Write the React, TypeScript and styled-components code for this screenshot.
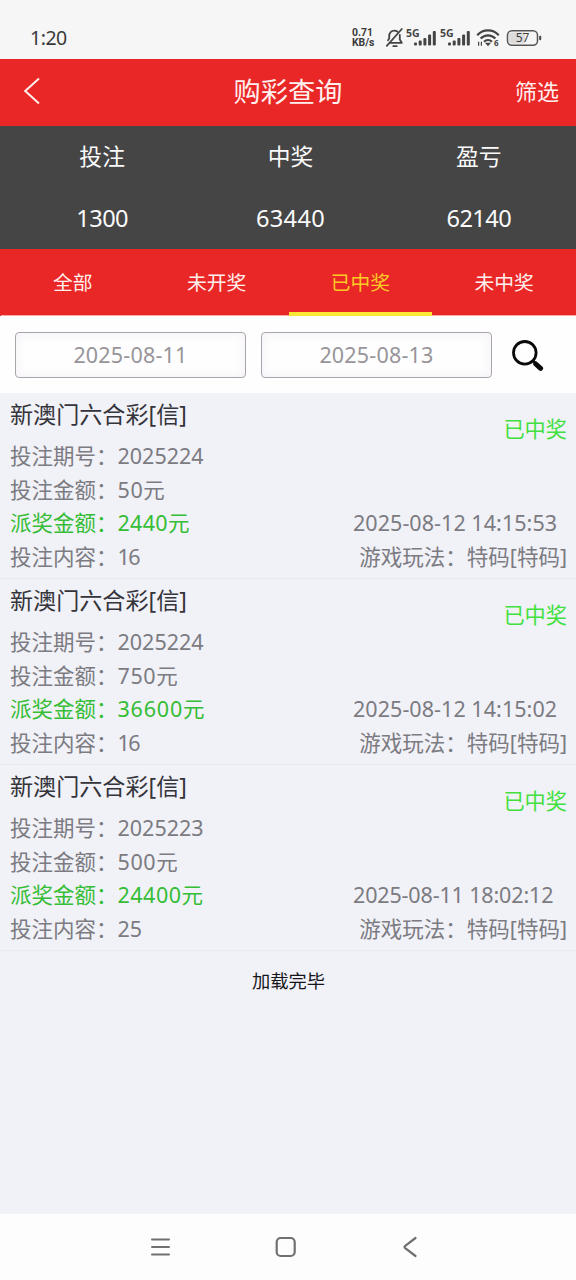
import React from "react";
import styled, { createGlobalStyle } from "styled-components";

const GlobalStyle = createGlobalStyle`
  * { box-sizing: border-box; }
  body {
    margin: 0;
    background: #f1f1f8;
    font-family: "Noto Sans", "Noto Sans CJK SC", sans-serif;
  }
`;

const Screen = styled.div`
  width: 576px;
  height: 1280px;
  display: flex;
  flex-direction: column;
  overflow: hidden;
  background: #f1f1f8;
`;

const StatusBar = styled.div`
  height: 59px;
  flex: none;
  display: flex;
  justify-content: space-between;
  padding: 16px 34px 0 30px;
  background: #f6f6f6;
  color: #3a3a3a;
`;

const Clock = styled.div`
  height: 42px;
  line-height: 43px;
  font-size: 19.5px;
  letter-spacing: -0.5px;
`;

const StatusIcons = styled.div`
  display: flex;
  height: 43px;
  align-items: center;
`;

const NetSpeed = styled.div`
  width: 32px;
  font: 700 10.4px/10px Roboto, sans-serif;
  white-space: nowrap;
`;

const SpeedLine = styled.div`
  height: 10px;
`;

const Header = styled.header`
  height: 67px;
  flex: none;
  display: grid;
  grid-template-columns: 1fr auto 1fr;
  align-items: center;
  padding: 0 17px 0 23px;
  background: #e92726;
  color: #fff0ee;
`;

const BackIcon = styled.svg`
  width: 18px;
  height: 28px;
  margin-bottom: 3px;
`;

const Title = styled.h1`
  margin: 0 6px 0 0;
  height: 67px;
  line-height: 65px;
  font-size: 27.2px;
  font-weight: 400;
`;

const FilterLink = styled.div`
  height: 67px;
  line-height: 65px;
  text-align: right;
  font-size: 22px;
`;

const Stats = styled.section`
  height: 123px;
  flex: none;
  display: grid;
  grid-template-columns: repeat(3, 1fr);
  padding: 0 3px 0 8px;
  background: #454545;
  color: #fafafa;
  text-align: center;
`;

const StatLabel = styled.div`
  height: 61px;
  line-height: 61px;
  font-size: 22.8px;
`;

const StatValue = styled.div<{ $track?: number }>`
  height: 62px;
  line-height: 62px;
  font-size: 23.6px;
  letter-spacing: ${(p) => p.$track ?? 0}px;
`;

const Tabs = styled.nav`
  height: 67px;
  flex: none;
  display: grid;
  grid-template-columns: repeat(4, 1fr);
  padding-left: 1px;
  background: #e92726;
`;

const Tab = styled.div<{ $active?: boolean }>`
  height: 67px;
  line-height: 67px;
  text-align: center;
  font-size: 19.8px;
  color: ${(p) => (p.$active ? "#fbcb24" : "#fff0ee")};
  border-bottom: ${(p) => (p.$active ? "4px solid #fbe834" : "1px solid #f6a9a6")};
`;

const SearchRow = styled.div`
  height: 77px;
  flex: none;
  display: flex;
  align-items: flex-start;
  gap: 15px;
  padding: 16px 0 0 15px;
  background: #fefefe;
`;

const DateField = styled.div`
  width: 231px;
  height: 46px;
  line-height: 43px;
  border: 1px solid #aaa5ad;
  border-radius: 4px;
  box-shadow: inset 0 0 12px #f3eff5;
  color: #979599;
  text-align: center;
  font-size: 21.5px;
  letter-spacing: 0.2px;
`;

const SearchButton = styled.div`
  margin: 8px 0 0 5px;
  height: 32px;
`;

const Record = styled.article`
  height: 186px;
  flex: none;
  display: flex;
  justify-content: space-between;
  padding: 0 9px 0 10px;
  border-bottom: 1px solid #e8e8ee;
  white-space: nowrap;
`;

const Details = styled.div``;

const Meta = styled.div`
  width: 214px;
  text-align: right;
`;

const Game = styled.div`
  height: 46px;
  line-height: 42px;
  font-size: 23.1px;
  color: #34343a;
`;

const Line = styled.div<{ $win?: boolean }>`
  height: 33.5px;
  line-height: 33.5px;
  font-size: 21.5px;
  color: ${(p) => (p.$win ? "#35bd35" : "#7b7b81")};
`;

const Value = styled.span<{ $track: number }>`
  letter-spacing: ${(p) => p.$track}px;
`;

const Status = styled.div`
  height: 113px;
  padding-top: 19px;
  line-height: 33px;
  font-size: 21.2px;
  color: #42e03f;
`;

const Time = styled(Line)`
  text-align: left;
`;

const Finished = styled.div`
  height: 60px;
  line-height: 59px;
  padding-left: 1px;
  text-align: center;
  font-size: 18.3px;
  color: #161618;
`;

const Spacer = styled.div`
  flex: 1;
`;

const NavBar = styled.footer`
  height: 66px;
  flex: none;
  display: flex;
  align-items: center;
  gap: 101px;
  padding-left: 148px;
  background: #fdfdfd;
`;

const WifiIcon = styled.svg`
  width: 24px;
  height: 20px;
  margin: 0 6px 0 2px;
`;

const BellOff = () => (
  <svg width="22" height="22" viewBox="0 0 22 22" fill="none" stroke="#444" strokeWidth="1.8" strokeLinecap="round" strokeLinejoin="round">
    <path d="M6 15.800H17.800L15.800 12.500V8M4 13.200L5.200 11.500V9C5.200 5.600 7.400 3.600 10.300 3.600c1.200 0 2.200.3 3 .9M9.300 19.200h3.400M17.800 2L2.800 18.800" />
  </svg>
);

const Signal = () => (
  <svg width="34" height="22" viewBox="0 0 34 22" fill="#444">
    <text x="0" y="10" fontSize="10.500" fontWeight="700" fontFamily="Noto Sans">5G</text>
    <rect x="8" y="15.500" width="3" height="3" rx="1" />
    <rect x="12.700" y="13.500" width="3" height="5" rx="1" />
    <rect x="17.400" y="11" width="3" height="7.500" rx="1" />
    <rect x="22.100" y="7.500" width="3" height="11" rx="1" />
    <rect x="26.800" y="4" width="3" height="14.500" rx="1" />
  </svg>
);

const Wifi = () => (
  <WifiIcon viewBox="0 0 24 20" fill="none" stroke="#444" strokeWidth="2.2">
    <path d="M1.200 7.200C7.200 .8 16.800 .8 22.800 7.200M4.600 10.600c4.300-4.400 10.500-4.400 14.800 0M8 13.800c2.400-2.400 5.600-2.400 8 0" />
    <path d="M9 14.800h6l-3 3.400z" fill="#444" stroke="none" />
    <path d="M2.600 17.800v-4M5.400 13.800v4" strokeWidth="1.2" />
    <text x="18" y="18.400" fontSize="8" fontWeight="700" fill="#444" stroke="none" fontFamily="Noto Sans">6</text>
  </WifiIcon>
);

const Battery = () => (
  <svg width="36" height="18" viewBox="0 0 36 18">
    <rect x="1.500" y="1.800" width="30" height="14.400" rx="4.500" fill="#f6f6f6" stroke="#555" strokeWidth="1.500" />
    <path d="M6 3.400h13v11.200H6a3 3 0 0 1-3-3V6.400a3 3 0 0 1 3-3z" fill="#dcdcdc" />
    <rect x="33.200" y="6.800" width="2" height="4.500" rx="1" fill="#444" />
    <text x="16.500" y="13.400" fontSize="12" textAnchor="middle" fill="#3d3d3d" fontFamily="Noto Sans">57</text>
  </svg>
);

const records = [
  { issue: "2025224", stake: "50元", prize: "2440元", prizeTrack: 0.3, pick: "16", pickTrack: -1.5, time: "2025-08-12 14:15:53", timeTrack: 0.05 },
  { issue: "2025224", stake: "750元", prize: "36600元", prizeTrack: 0.8, pick: "16", pickTrack: -1.5, time: "2025-08-12 14:15:02", timeTrack: 0.05 },
  { issue: "2025223", stake: "500元", prize: "24400元", prizeTrack: 0.5, pick: "25", pickTrack: 0, time: "2025-08-11 18:02:12", timeTrack: -0.15 },
];

const stats = [
  { label: "投注", value: "1300", track: -0.6 },
  { label: "中奖", value: "63440", track: 0.3 },
  { label: "盈亏", value: "62140", track: -0.6 },
];

const tabs = ["全部", "未开奖", "已中奖", "未中奖"];

export default function App() {
  return (
    <Screen>
      <GlobalStyle />
      <StatusBar>
        <Clock>1:20</Clock>
        <StatusIcons>
          <NetSpeed>
            <SpeedLine>0.71</SpeedLine>
            <SpeedLine>KB/s</SpeedLine>
          </NetSpeed>
          <BellOff />
          <Signal />
          <Signal />
          <Wifi />
          <Battery />
        </StatusIcons>
      </StatusBar>
      <Header>
        <BackIcon viewBox="0 0 18 28" fill="none" stroke="#fff0ee" strokeWidth="2">
          <path d="M16 1.500L2.200 14 16 26.500" />
        </BackIcon>
        <Title>购彩查询</Title>
        <FilterLink>筛选</FilterLink>
      </Header>
      <Stats>
        {stats.map((s) => (
          <div key={s.label}>
            <StatLabel>{s.label}</StatLabel>
            <StatValue $track={s.track}>{s.value}</StatValue>
          </div>
        ))}
      </Stats>
      <Tabs>
        {tabs.map((tab) => (
          <Tab key={tab} $active={tab === "已中奖"}>{tab}</Tab>
        ))}
      </Tabs>
      <SearchRow>
        <DateField>2025-08-11</DateField>
        <DateField>2025-08-13</DateField>
        <SearchButton>
          <svg width="32" height="32" viewBox="0 0 32 32" fill="none" stroke="#0a0a0a">
            <circle cx="12.800" cy="12.800" r="11.300" strokeWidth="2.800" />
            <path d="M20.800 20.800l3 3" strokeWidth="3" />
            <path d="M23.800 24l4.800 4.300" strokeWidth="5" strokeLinecap="round" />
          </svg>
        </SearchButton>
      </SearchRow>
      {records.map((r) => (
        <Record key={r.time}>
          <Details>
            <Game>新澳门六合彩[信]</Game>
            <Line>投注期号：{r.issue}</Line>
            <Line>投注金额：<Value $track={0.6}>{r.stake}</Value></Line>
            <Line $win>派奖金额：<Value $track={r.prizeTrack}>{r.prize}</Value></Line>
            <Line>投注内容：<Value $track={r.pickTrack}>{r.pick}</Value></Line>
          </Details>
          <Meta>
            <Status>已中奖</Status>
            <Time><Value $track={r.timeTrack}>{r.time}</Value></Time>
            <Line>游戏玩法：特码[特码]</Line>
          </Meta>
        </Record>
      ))}
      <Finished>加载完毕</Finished>
      <Spacer />
      <NavBar>
        <svg width="24" height="24" viewBox="0 0 24 24" stroke="#707073" strokeWidth="2" strokeLinecap="round">
          <path d="M4 4.500h17M4 12h17M4 19.500h17" />
        </svg>
        <svg width="24" height="24" viewBox="0 0 24 24" fill="none" stroke="#707073" strokeWidth="2.200">
          <rect x="3.700" y="3" width="18" height="18" rx="4" />
        </svg>
        <svg width="24" height="24" viewBox="0 0 24 24" fill="none" stroke="#707073" strokeWidth="2.200" strokeLinecap="round" strokeLinejoin="round">
          <path d="M17.500 3L7.200 10.800q-1.400 1.200 0 2.400L17.500 21" />
        </svg>
      </NavBar>
    </Screen>
  );
}
